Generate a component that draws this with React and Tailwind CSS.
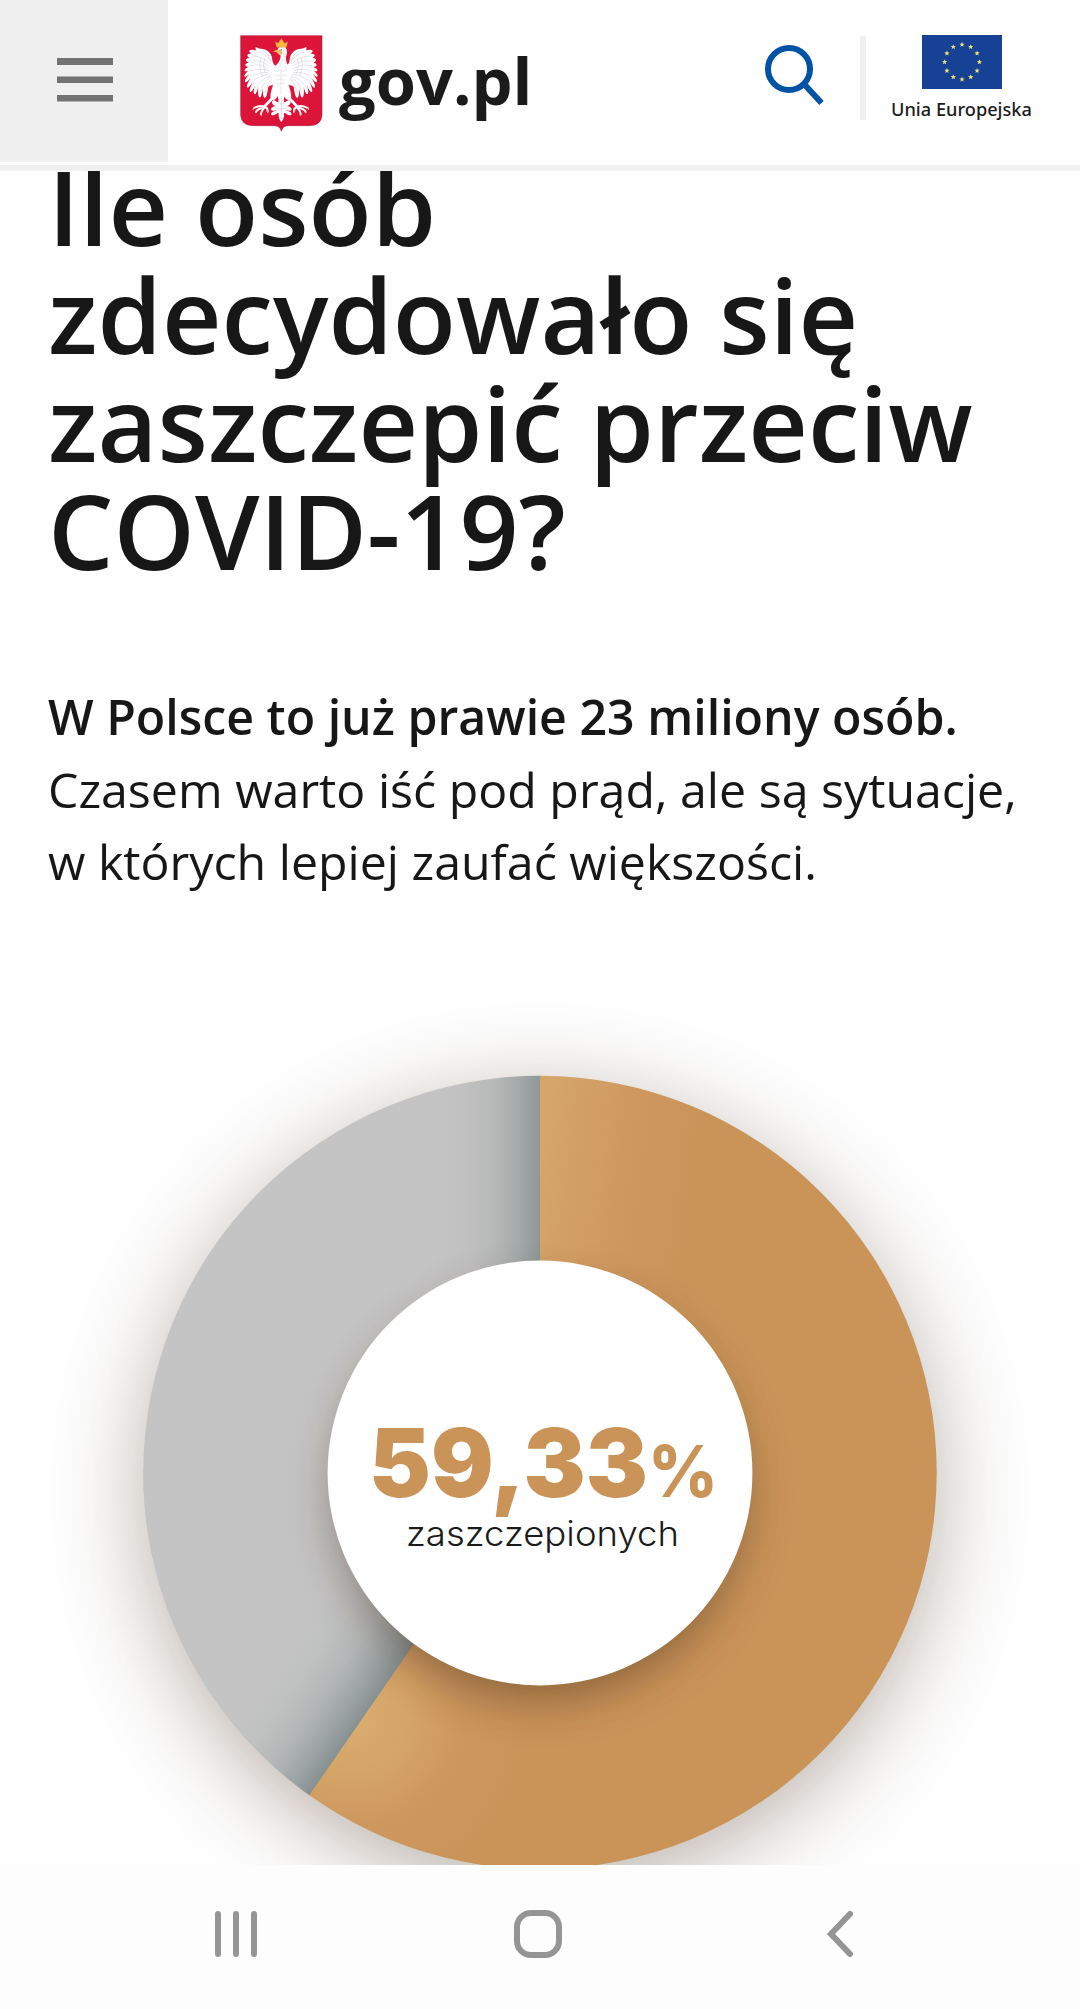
const stars = Array.from({ length: 12 }, (_, i) => {
  const a = (i * Math.PI) / 6;
  return [40 + 17.4 * Math.sin(a), 27 - 17.4 * Math.cos(a)];
});

const starPoints = (cx, cy, r) =>
  Array.from({ length: 10 }, (_, i) => {
    const a = (i * Math.PI) / 5;
    const q = i % 2 ? r * 0.42 : r;
    return `${(cx + q * Math.sin(a)).toFixed(2)},${(cy - q * Math.cos(a)).toFixed(2)}`;
  }).join(" ");

function Wing() {
  return (
    <g>
      <path
        fill="#fff"
        d="M168 140 C160 136 158 130 156 122 C156 104 143 90 128 88 C120 88 112 86 107 82 C104 84 106 88 107 92 C99 90 92 89 88 92 C85 96 90 99 93 102 C87 102 82 103 81 107 C81 111 85 113 88 115 C82 115 77 117 77 121 C78 126 82 127 85 129 C79 130 74 133 75 137 C76 141 81 141 85 142 C78 144 72 149 73 153 C75 157 81 154 85 153 C78 158 71 165 72 170 C75 174 82 167 87 164 C80 171 72 181 74 187 C78 191 86 180 91 175 C85 184 78 197 80 203 C84 208 92 194 97 187 C92 197 86 211 89 217 C94 220 101 205 104 197 C101 207 98 219 102 223 C107 226 112 211 114 202 C113 213 112 228 117 233 C123 237 125 219 127 207 C128 216 127 230 132 234 C139 237 142 214 144 201 C150 196 158 196 166 196 Z"
      />
      <path
        fill="none"
        stroke="#c9c4d2"
        strokeWidth="1.5"
        d="M151 124 C140 108 126 100 112 98 M148 132 C132 114 112 108 96 110 M146 140 C128 124 108 122 90 125 M145 148 C126 134 108 134 90 139 M145 154 C126 146 108 148 90 154 M146 160 C128 156 112 160 93 169 M148 165 C132 164 116 172 97 183 M151 169 C136 172 122 182 107 203 M154 172 C140 178 130 190 119 217 M158 174 C148 182 140 194 134 220 M128 94 C142 102 149 112 151 128 M132 116 C128 134 130 152 138 166 M122 114 C116 132 118 152 126 170"
      />
    </g>
  );
}

function Leg() {
  return (
    <g>
      <path fill="#fff" stroke="#d6d0da" strokeWidth="1" d="M160 192 C166 188 177 190 179 196 L177 222 C168 238 160 244 154 239 C148 235 150 218 160 192 Z" />
      <path fill="none" stroke="#fff" strokeLinecap="round" strokeWidth="8" d="M154 238 L131 262" />
      <path fill="none" stroke="#fff" strokeLinecap="round" strokeWidth="6" d="M133 261 C122 256 110 260 101 265 M131 264 C119 265 110 270 107 277 M132 264 C125 272 122 279 122 284 M134 262 C139 264 143 269 142 276" />
      <path fill="none" stroke="#f0b98a" strokeLinecap="round" strokeWidth="4" d="M101 265 L98 269 M107 276 L107 279 M122 284 L123 287 M142 274 L142 278" />
    </g>
  );
}

function Emblem() {
  return (
    <svg className="h-[97px] w-[83px] shrink-0" viewBox="59 46 249 291">
      <path fill="#dc1439" stroke="#a3112d" strokeWidth="1.5" d="M61 48 H305 V286 Q303 318 266 318 H202 Q187 319 183 335 Q179 319 164 318 H100 Q63 318 61 286 Z" />
      <Wing />
      <g transform="translate(364 0) scale(-1 1)"><Wing /></g>
      <Leg />
      <g transform="translate(363 0) scale(-1 1)"><Leg /></g>
      <path fill="#fff" d="M171 93 C173 82 183 78 193 81 C201 87 202 99 197 111 C196 126 201 136 211 145 C218 160 206 184 196 205 L190 238 H174 L168 205 C158 184 146 162 155 145 C169 137 181 124 181 108 C178 104 174 102 171 99 Z" />
      <path fill="none" stroke="#cdc7d3" strokeWidth="1.3" d="M190 91 C191 112 185 132 172 148 M195 101 C190 124 197 137 198 150 M164 152 Q172 160 180 151 Q188 160 198 151 M163 164 Q172 173 181 163 Q190 173 200 164 M166 177 Q174 186 182 176 Q190 186 197 177 M170 190 Q176 199 182 190 Q188 198 194 190 M182 149 V232" />
      <path fill="#fff" d="M175 224 H190 L191 248 C199 246 202 238 209 243 C216 250 204 260 197 260 C206 259 217 264 213 272 C206 276 199 269 194 270 C203 274 216 277 213 285 C206 292 197 279 191 280 C192 289 190 300 183 307 C176 300 174 289 175 280 C169 279 160 292 153 285 C150 277 163 274 172 270 C167 269 160 276 153 272 C149 264 160 259 169 260 C162 260 150 250 157 243 C164 238 167 246 174 248 Z" />
      <path fill="none" stroke="#cdb8c7" strokeWidth="1.5" d="M183 235 V298 M173 249 Q183 257 193 249 M172 265 Q183 272 194 265" />
      <path fill="#eec063" d="M180 90 C171 89 163 92 157 97 C165 95 168 98 172 100 C174 105 179 107 185 103 C188 99 187 92 180 90 Z" />
      <circle cx="183" cy="90" r="1.8" fill="#523a32" />
      <path fill="#fbb83e" stroke="#df9431" strokeWidth="1" d="M169 83 L165 67 L174 71 L178 63 L183 57 L188 63 L192 71 L202 67 L198 83 Z" />
    </svg>
  );
}

function Header() {
  return (
    <header className="h-[171px] shrink-0 border-b-[6px] border-[#f0f0f0] bg-white">
      <div className="flex h-[162px] items-start">
        <button aria-label="Menu" className="flex h-full w-[168px] shrink-0 items-start bg-[#f0f0f0] pt-[58px] pl-[57px]">
          <svg className="h-[44px] w-[56px]" viewBox="0 0 56 44" fill="#737373">
            <path d="M0 0h56v7H0zM0 18.5h56v6.5H0zM0 37h56v6.5H0z" />
          </svg>
        </button>
        <div className="flex flex-1 items-start pt-[35px] pl-[72px]">
          <Emblem />
          <span className="ml-4 font-['Open_Sans',sans-serif] text-[65px] leading-[91px] font-bold text-[#1b1b1b]">gov.pl</span>
        </div>
        <button aria-label="Szukaj" className="mt-[44px] mr-[36px] shrink-0">
          <svg className="h-[62px] w-[60px]" viewBox="0 0 60 62" fill="none" stroke="#0052a5" strokeWidth="6">
            <circle cx="25" cy="25" r="21" />
            <path d="M40 40 L57.5 59" />
          </svg>
        </button>
        <div className="mt-[36px] h-[84px] w-[6px] shrink-0 bg-[#f0f0f0]" />
        <div className="mr-12 ml-[25px] flex w-[141px] shrink-0 flex-col items-center pt-[35px]">
          <svg className="h-[54px] w-[80px]" viewBox="0 0 80 54">
            <rect width="80" height="54" fill="#164194" />
            {stars.map(([x, y]) => (
              <polygon key={`${x}-${y}`} points={starPoints(x, y, 2.8)} fill="#e8e576" />
            ))}
          </svg>
          <span className="mt-[7px] font-['Noto_Sans',sans-serif] text-[18.2px] leading-[27px] font-medium whitespace-nowrap text-[#1b1b1b]">Unia Europejska</span>
        </div>
      </div>
    </header>
  );
}

function Donut() {
  return (
    <div className="relative h-[945px] w-[1080px]">
      <svg className="block h-full w-full" viewBox="0 920 1080 945">
        <defs>
          <linearGradient id="grayTop" gradientUnits="userSpaceOnUse" x1="540" y1="0" x2="430" y2="0">
            <stop offset="0" stopColor="#8f9898" />
            <stop offset=".2" stopColor="#a4abaa" />
            <stop offset=".42" stopColor="#b6b9b8" />
            <stop offset=".65" stopColor="#c0c0c0" />
            <stop offset="1" stopColor="#c4c4c4" />
          </linearGradient>
          <linearGradient id="grayBottom" gradientUnits="userSpaceOnUse" x1="362" y1="1720" x2="276" y2="1660">
            <stop offset="0" stopColor="#879091" />
            <stop offset=".2" stopColor="#9da4a5" />
            <stop offset=".45" stopColor="#b4b7b7" />
            <stop offset=".7" stopColor="#bfc0c0" />
            <stop offset="1" stopColor="#c4c4c4" />
          </linearGradient>
          <linearGradient id="tanTop" gradientUnits="userSpaceOnUse" x1="540" y1="1160" x2="690" y2="1180">
            <stop offset="0" stopColor="#d5a56a" />
            <stop offset=".65" stopColor="#cd975e" />
            <stop offset="1" stopColor="#ca9459" />
          </linearGradient>
          <radialGradient id="tanBottom" gradientUnits="userSpaceOnUse" cx="355" cy="1722" r="170">
            <stop offset="0" stopColor="#d9ac70" />
            <stop offset=".3" stopColor="#d5a568" />
            <stop offset=".62" stopColor="#cd975e" />
            <stop offset="1" stopColor="#ca9459" />
          </radialGradient>
          <filter id="soft" x="-30%" y="-30%" width="160%" height="160%"><feGaussianBlur stdDeviation="45" /></filter>
          <filter id="softInner" x="-30%" y="-30%" width="160%" height="160%"><feGaussianBlur stdDeviation="23" /></filter>
          <clipPath id="disc"><circle cx="540" cy="1472.5" r="396.7" /></clipPath>
        </defs>
        <circle cx="540" cy="1492" r="396" fill="#49301b" opacity=".38" filter="url(#soft)" />
        <g clipPath="url(#disc)">
          <rect x="140" y="1070" width="401" height="800" fill="url(#grayTop)" />
          <path d="M540 1465 L257.6 1870 H140 V1465 Z" fill="url(#grayBottom)" />
          <path d="M540 1070 H940 V1474 H540 Z" fill="url(#tanTop)" />
          <path d="M540 1465 L413.4 1644.7 L257.6 1870 H940 V1473 H540 Z" fill="url(#tanBottom)" />
          <circle cx="540" cy="1494" r="207" fill="#3c2817" opacity=".42" filter="url(#softInner)" />
        </g>
        <circle cx="540" cy="1473" r="212.4" fill="#fff" />
        <g fontFamily="Inter, sans-serif" fill="#ca9459">
          <text x="369" y="1496.5" fontSize="95" fontWeight="900" textLength="279" lengthAdjust="spacingAndGlyphs">59,33</text>
          <text x="648" y="1496.5" fontSize="71" fontWeight="800" textLength="70" lengthAdjust="spacingAndGlyphs">%</text>
          <text x="406" y="1546" fontSize="34.5" fontWeight="300" fill="#1b1b1b" textLength="273" lengthAdjust="spacingAndGlyphs">zaszczepionych</text>
        </g>
      </svg>
    </div>
  );
}

function NavBar() {
  return (
    <nav className="flex h-36 shrink-0 items-start bg-[#fdfdfd] pt-[45px] pl-[212px]">
      <svg className="h-12 w-12" viewBox="0 0 48 48" stroke="#959595" strokeWidth="6" strokeLinecap="round">
        <path d="M6 4v40M24 4v40M42 4v40" />
      </svg>
      <svg className="ml-[254px] h-12 w-12" viewBox="0 0 48 48" fill="none" stroke="#959595" strokeWidth="6">
        <rect x="3" y="3" width="42" height="42" rx="14" />
      </svg>
      <svg className="ml-[263px] h-12 w-8" viewBox="0 0 32 48" fill="none" stroke="#959595" strokeWidth="6" strokeLinecap="round">
        <path d="M25 4 L6 24 L25 44" />
      </svg>
    </nav>
  );
}

export default function App() {
  return (
    <div className="flex h-[2009px] w-[1080px] flex-col overflow-hidden bg-[#fefefe] font-['Open_Sans',sans-serif] text-[#171717]">
      <Header />
      <main className="flex h-[1694px] shrink-0 flex-col overflow-hidden">
        <h1 className="-mt-[19px] pl-12 text-[103.5px] leading-[108px] font-semibold whitespace-nowrap">
          Ile osób<br />zdecydowało się<br />zaszczepić przeciw<br />COVID-19?
        </h1>
        <p className="mt-24 h-60 shrink-0 pl-12 text-[48.28px] leading-[72.7px] whitespace-nowrap">
          <strong className="font-semibold">W Polsce to już prawie 23 miliony osób.</strong><br />
          Czasem warto iść pod prąd, ale są sytuacje,<br />w których lepiej zaufać większości.
        </p>
        <div className="shrink-0"><Donut /></div>
      </main>
      <NavBar />
    </div>
  );
}
